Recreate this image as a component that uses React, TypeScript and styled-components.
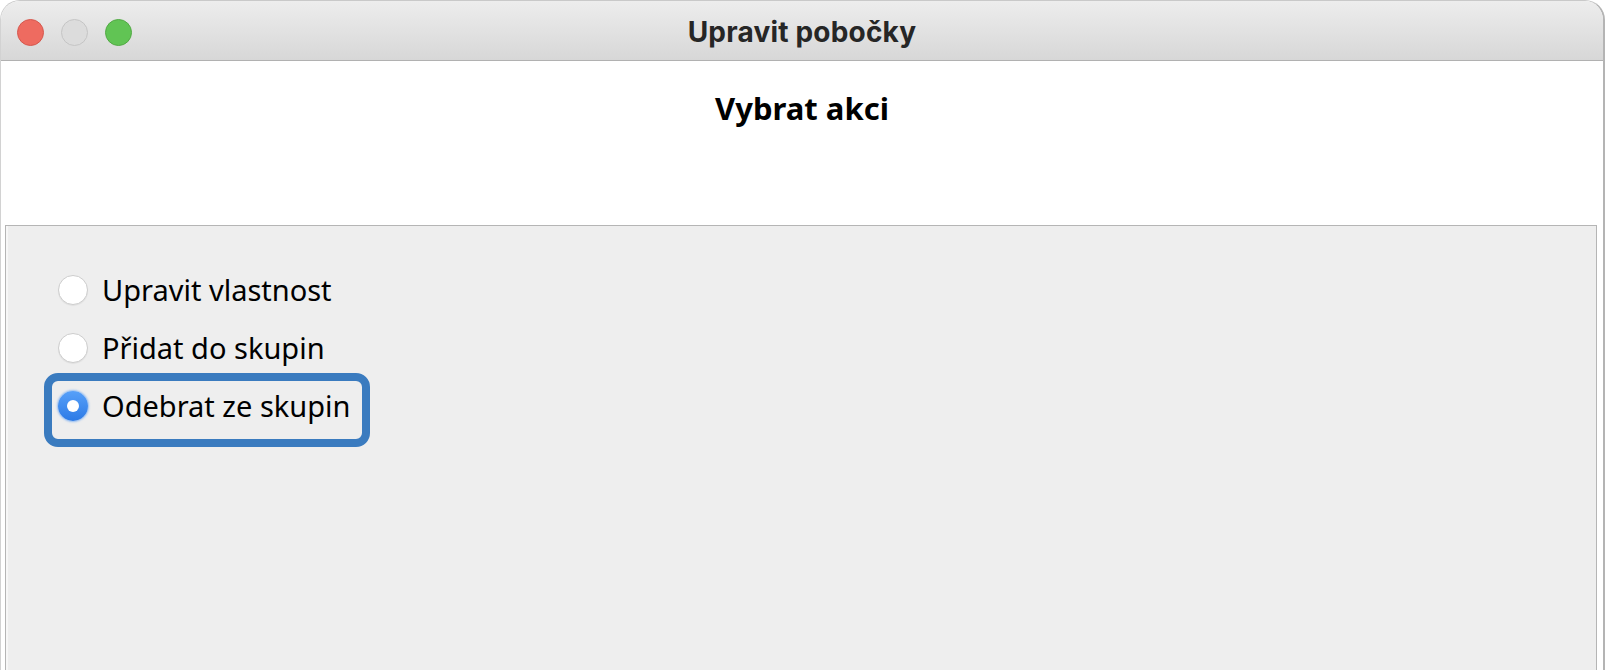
import React from 'react';
import styled, { createGlobalStyle } from 'styled-components';

const GlobalStyle = createGlobalStyle`
  html, body { margin: 0; padding: 0; background: #ffffff; }
  body { font-family: "Noto Sans", "DejaVu Sans", sans-serif; color: #111; }
`;

const Window = styled.div`
  width: 1605px;
  height: 670px;
  box-sizing: border-box;
  display: flex;
  flex-direction: column;
  border-top: 1px solid #c9c9c9;
  border-left: 1px solid #d2d2d2;
  border-right: 2px solid #b4b4b4;
  border-top-left-radius: 20px;
  border-top-right-radius: 20px;
  overflow: hidden;
  background: #ffffff;
`;

const TitleBar = styled.div`
  height: 60px;
  flex: none;
  box-sizing: border-box;
  padding-top: 3px;
  display: grid;
  grid-template-columns: 1fr auto 1fr;
  align-items: center;
  background: linear-gradient(#ededed, #d7d7d7);
  border-bottom: 1px solid #b1b1b1;
`;

const Lights = styled.div`
  display: flex;
  align-items: center;
  gap: 17px;
  padding-left: 16px;
`;

const Light = styled.span<{ $fill: string; $edge: string }>`
  width: 25px;
  height: 25px;
  border-radius: 50%;
  background: ${(p) => p.$fill};
  border: 1px solid ${(p) => p.$edge};
`;

const Title = styled.div`
  font-family: "Inter", "Noto Sans", sans-serif;
  font-weight: 700;
  font-size: 28px;
  color: #262626;
  letter-spacing: 0.2px;
`;

const Header = styled.div`
  height: 164px;
  flex: none;
  box-sizing: border-box;
  padding-top: 26px;
  text-align: center;
  background: #ffffff;
`;

const Heading = styled.h1`
  margin: 0;
  font-family: "Noto Sans", sans-serif;
  font-weight: 700;
  font-size: 31px;
  line-height: normal;
  color: #000;
`;

const Panel = styled.div`
  flex: 1;
  margin: 0 6px 0 4px;
  padding: 39px 0 0 46px;
  background: #eeeeee;
  border-top: 1px solid #b5b5b5;
  border-left: 1px solid #b5b5b5;
  border-right: 1px solid #b5b5b5;
  box-shadow: inset 2px 0 0 #f7f7f7;
  display: flex;
  flex-direction: column;
  align-items: flex-start;
`;

const Option = styled.label<{ $focused?: boolean }>`
  display: flex;
  align-items: center;
  gap: 14px;
  height: 58px;
  box-sizing: border-box;
  padding: 0 12px 8px 6px;
  border-radius: 6px;
  outline: ${(p) => (p.$focused ? '8px solid #3a7bbf' : 'none')};
  cursor: default;
`;

const Radio = styled.span<{ $checked?: boolean }>`
  width: 30px;
  height: 30px;
  box-sizing: border-box;
  border-radius: 50%;
  display: flex;
  align-items: center;
  justify-content: center;
  flex: none;
  background: ${(p) => (p.$checked ? 'linear-gradient(#57a0f9, #2c7ae6)' : '#ffffff')};
  border: ${(p) => (p.$checked ? 'none' : '1px solid #cdcdcd')};
  box-shadow: ${(p) =>
    p.$checked
      ? '0 0 2px 1px rgba(70, 145, 245, 0.55)'
      : 'inset 0 1px 1px rgba(255,255,255,0.9), 0 1px 1px rgba(0,0,0,0.06)'};
`;

const Dot = styled.span`
  width: 12px;
  height: 12px;
  border-radius: 50%;
  background: #ffffff;
`;

const LabelText = styled.span`
  font-family: "Noto Sans", sans-serif;
  font-size: 29px;
  line-height: 30px;
  color: #000;
`;

const options = [
  { label: 'Upravit vlastnost', checked: false },
  { label: 'Přidat do skupin', checked: false },
  { label: 'Odebrat ze skupin', checked: true },
];

export default function App() {
  return (
    <>
      <GlobalStyle />
      <Window>
        <TitleBar>
          <Lights>
            <Light $fill="#ee6b60" $edge="#d5584e" />
            <Light $fill="#dcdcdc" $edge="#c4c4c4" />
            <Light $fill="#61c454" $edge="#52a944" />
          </Lights>
          <Title>Upravit pobočky</Title>
          <div />
        </TitleBar>
        <Header>
          <Heading>Vybrat akci</Heading>
        </Header>
        <Panel>
          {options.map((o) => (
            <Option key={o.label} $focused={o.checked}>
              <Radio $checked={o.checked}>{o.checked && <Dot />}</Radio>
              <LabelText>{o.label}</LabelText>
            </Option>
          ))}
        </Panel>
      </Window>
    </>
  );
}
